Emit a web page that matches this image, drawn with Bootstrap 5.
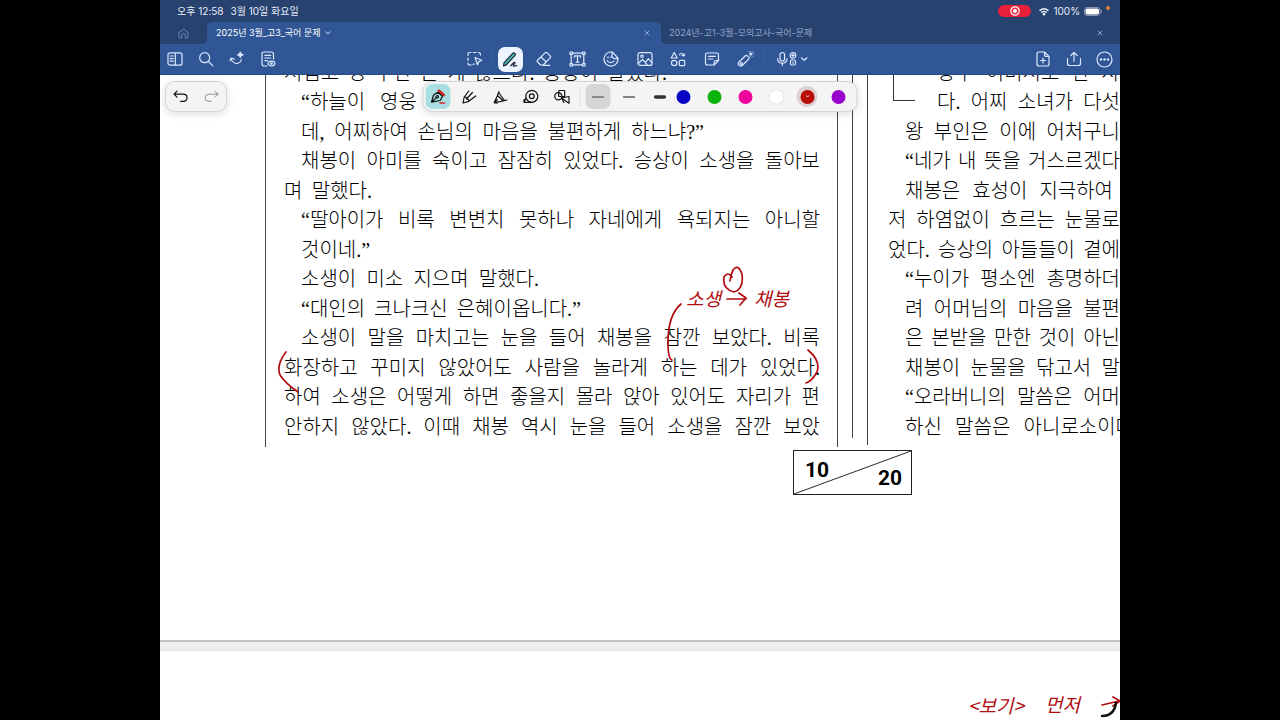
<!DOCTYPE html>
<html lang="ko">
<head>
<meta charset="utf-8">
<meta name="viewport" content="width=device-width, initial-scale=1">
<title>2025년 3월_고3_국어 문제</title>
<link href="https://cdn.jsdelivr.net/npm/bootstrap@5.3.0/dist/css/bootstrap.min.css" rel="stylesheet">
<style>
  :root { --navy: #28426f; --blue: #305696; --ink: #b00d10; }
  body { background: #000; font-family: Inter, "Noto Sans CJK KR", sans-serif; }
  button { background: none; border: 0; padding: 0; color: inherit; }
  svg { display: block; fill: none; stroke: currentColor; stroke-width: 1.2; stroke-linecap: round; stroke-linejoin: round; }
  svg.hairline { stroke-width: .8; }
  svg.strong { stroke-width: 1.4; }

  .app-shell { background: #fff; }
  .status-line { background: var(--navy); color: #e6ecf8; height: 22px; font-size: 10px; line-height: 22px; padding: 0 10px 0 17px; }
  .status-line .clock { margin-right: 7px; }
  .rec-pill { background: #e8203a; width: 33px; height: 12px; border-radius: 6px; }
  .cam-dot { width: 4px; height: 4px; background: #e0823f; align-self: flex-start; margin-top: 6px; }

  .doc-tabs { height: 22px; background: linear-gradient(var(--navy) 50%, var(--blue) 50%); }
  .home-tab { width: 47px; background: var(--navy); color: #7f95bf; border-bottom-right-radius: 5px; }
  .doc-tab { flex: 1 1 0; font-size: 9px; line-height: 22px; }
  .doc-tab a { color: inherit; }
  .doc-tab.open { background: var(--blue); color: #fff; border-radius: 5px 5px 0 0; padding: 0 11px 0 9px; }
  .doc-tab.idle { background: var(--navy); color: #93a5c9; border-bottom-left-radius: 5px; padding: 0 17px 0 8px; }
  .tab-close { color: #a9bce2; }

  .tool-strip { background: var(--blue); color: #dbe8ff; height: 31px; padding: 0 3px 0 2px; border-bottom: 1px solid #274a86; }
  .tool { width: 25px; height: 25px; display: flex; align-items: center; justify-content: center; border-radius: 7px; flex: none; }
  .tool.on { background: #edf3ff; color: #1b2430; }
  .side { flex: 1 1 0; gap: 6px; }
  .mid-tools { padding-right: 7px; }
  .main-tools { width: 260px; }
  .bar { width: 1px; height: 16px; background: #3a61a4; margin: 0 6px; }

  .float-bar { background: #f4f4f5; border: 1px solid #d4d4d6; border-radius: 10px; box-shadow: 0 2px 8px rgba(0,0,0,.14); height: 31px; color: #111; top: 6px; z-index: 3; }
  .history-bar { left: 5px; padding: 0 2px; gap: 6px; }
  .pen-bar { padding: 0 8px 0 2px; }
  .pen-bar .bar { background: #dedee0; margin: 0 5px; height: 20px; }
  .pens { gap: 6px; }
  .pens .picked { background: #a9dfe2; }
  .pens .held { background: #d6d6d9; }
  .swatches { gap: 10px; }
  .swatch { width: 21px; height: 21px; display: flex; align-items: center; justify-content: center; border-radius: 50%; }
  .swatch::before { content: ""; width: 14px; height: 14px; border-radius: 50%; background: var(--c); }
  .swatch.white::before { box-shadow: 0 0 1px #aaa; }
  .swatch.chosen { background: #ddd0d0; color: #fff; position: relative; }
  .swatch.chosen svg { position: absolute; }

  .sheet { height: 565px; }
  .sheet-cols { display: grid; grid-template-columns: 105fr 573fr 15fr 14fr 253fr; }
  .story { font-family: "Liberation Serif", "Noto Sans CJK KR", serif; font-weight: 300; font-size: 20px; color: #000; line-height: 29px; }
  .story p { margin: 0; height: 29px; white-space: nowrap; text-align: justify; text-align-last: justify; padding-left: 17px; }
  .story p:nth-child(even) { margin-bottom: 1px; }
  .story p.flush { padding-left: 0; }
  .story p.hang { padding-left: 49px; }
  .story p.short { padding-right: 7px; }
  .story p.long { margin-right: -14px; }
  .len-a { width: 420px; }
  .len-b { width: 88px; }
  .len-c { width: 255px; }
  .len-d { width: 297px; }
  .len-e { width: 383px; }
  .col-left { grid-column: 2; border: solid #444; border-width: 0 1px; padding: 0 17px 4px 18px; height: 372px; overflow: hidden; }
  .gutter { border-right: 1px solid #444; height: 363px; }
  .col-right { grid-column: 5; border-left: 1px solid #444; padding-left: 20px; height: 370px; position: relative; }
  .story-lines { margin-top: -16px; }
  .elbow { position: absolute; left: 25px; top: 0; width: 22px; height: 26px; border: solid #333; border-width: 0 0 1px 1px; }
  .page-row { display: grid; grid-template-columns: 633fr 119px 208fr; margin-top: 3px; }
  .page-box { grid-column: 2; height: 45px; border: 1px solid #222; font: 700 21px/22px "Liberation Sans Narrow", Roboto, "Liberation Sans", sans-serif; color: #000; position: relative; padding: 8px 9px 5px 11px; }
  .page-box svg { position: absolute; inset: 0; width: 100%; height: 100%; stroke: #222; stroke-width: 1; }
  .sheet-gap { height: 11px; background: #efefef; border-top: 2px solid #c4c4c4; border-bottom: 1px solid #e3e3e3; }
  .ink { position: absolute; inset: 0; width: 100%; height: 100%; color: var(--ink); stroke-width: 1.7; z-index: 2; pointer-events: none; }
  .ink text { fill: var(--ink); stroke: none; font-family: "Noto Sans CJK KR", sans-serif; font-weight: 400; font-style: italic; font-size: 19px; }
</style>
</head>
<body>
<div class="app-shell w-75 mx-auto vh-100 d-flex flex-column overflow-hidden">
  <header class="flex-shrink-0">
    <div class="status-line d-flex align-items-center">
      <span class="clock">오후 12:58</span><span>3월 10일 화요일</span>
      <div class="ms-auto d-flex align-items-center">
        <span class="rec-pill d-flex align-items-center justify-content-center text-white me-2">
          <svg width="10" height="10" viewBox="0 0 10 10"><circle cx="5" cy="5" r="4.2"/><circle cx="5" cy="5" r="1.5" fill="currentColor"/></svg>
        </span>
        <svg class="strong me-1" width="10" height="9" viewBox="0 0 10 9"><path d="M1 3.4Q5 0 9 3.4M2.7 5.3Q5 3.5 7.3 5.3"/><circle cx="5" cy="7.2" r=".7" fill="currentColor"/></svg>
        <span class="me-1">100%</span>
        <svg width="18" height="9" viewBox="0 0 18 9"><rect x=".5" y=".5" width="15.5" height="8" rx="2.6" stroke="#8795b3" stroke-width="1"/><rect x="1.5" y="1.5" width="13.5" height="6" rx="1.8" fill="#fff" stroke="none"/><path d="M17.3 3.4v2" stroke="#8795b3"/></svg>
        <span class="cam-dot rounded-circle ms-1"></span>
      </div>
    </div>
    <nav class="doc-tabs d-flex" aria-label="문서 탭">
      <button class="home-tab d-flex align-items-center justify-content-center" aria-label="홈">
        <svg class="hairline" width="11" height="11" viewBox="0 0 11 11"><path d="M1 4.6 5.5 1 10 4.6V9q0 1-1 1H7.3V7.4q0-1.8-1.8-1.8T3.7 7.4V10H2Q1 10 1 9Z"/></svg>
      </button>
      <div class="doc-tab open d-flex align-items-center">
        <a href="#" class="text-decoration-none">2025년 3월_고3_국어 문제</a>
        <svg class="hairline ms-1" width="8" height="4" viewBox="0 0 8 4"><path d="m1.8.8 2.2 2 2.2-2"/></svg>
        <button class="tab-close ms-auto" aria-label="탭 닫기"><svg class="hairline" width="6" height="6" viewBox="0 0 6 6"><path d="m1 1 4 4m0-4L1 5"/></svg></button>
      </div>
      <div class="doc-tab idle d-flex align-items-center">
        <a href="#" class="text-decoration-none">2024년-고1-3월-모의고사-국어-문제</a>
        <button class="tab-close ms-auto" aria-label="탭 닫기"><svg class="hairline" width="6" height="6" viewBox="0 0 6 6"><path d="m1 1 4 4m0-4L1 5"/></svg></button>
      </div>
    </nav>
    <div class="tool-strip d-flex align-items-center">
      <div class="side d-flex">
        <button class="tool" aria-label="사이드바"><svg width="16" height="16" viewBox="0 0 16 16"><rect x="1" y="1.8" width="14" height="12.4" rx="2"/><path d="M8.3 2v12M3.2 5h3M3.2 7.6h3M3.2 10.2h3"/></svg></button>
        <button class="tool" aria-label="검색"><svg width="16" height="16" viewBox="0 0 16 16"><circle cx="6.7" cy="6.7" r="5"/><path d="m10.5 10.5 4.3 4.3"/></svg></button>
        <button class="tool" aria-label="AI"><svg width="16" height="16" viewBox="0 0 16 16"><path d="M1.5 7.2 3.2 10Q6 13.5 9.2 12.2 12 11 12.4 8.5M1 9.5l2-2.3 2.4 1"/><path d="m11.3 1 .8 2 2 .8-2 .8-.8 2-.8-2-2-.8 2-.8Z" fill="currentColor"/></svg></button>
        <button class="tool" aria-label="문서 보기"><svg width="16" height="16" viewBox="0 0 16 16"><path d="M7 15H4q-2 0-2-2V3q0-2 2-2h7.5q2 0 2 2v5M4.8 4.3h6M4.8 7h6M4.8 9.7h2.6"/><ellipse cx="11.5" cy="12.6" rx="3.4" ry="2.4"/><circle cx="11.5" cy="12.6" r=".7"/></svg></button>
      </div>
      <div class="mid-tools d-flex align-items-center">
        <button class="tool" aria-label="올가미"><svg width="16" height="16" viewBox="0 0 16 16"><path d="M1 4.5V3q0-1.5 1.5-1.5H4M6.3 1.5h3M11.5 1.5Q13.5 1.3 13.5 4M1 7v2.5M1 12q0 2 2 2h1.3M6 13.5l1.2-.6"/><path d="m8 6.5 6.8 2.8-3 1.3-1.3 3.2Z"/></svg></button>
        <span class="bar ms-1"></span>
        <div class="main-tools d-flex justify-content-between">
          <button class="tool on" aria-label="펜" aria-pressed="true"><svg width="17" height="17" viewBox="0 0 17 17"><path d="m2 11.8 8.8-9.5q1-1 2 0t.2 2L4.5 13.6 1.6 15Z" fill="#4bb9bd"/><path d="M8.8 14.8q3.5-4.5 4.2-3.3.5 1-1.4 2.3-.8 1.2.5 1.3l2.5-.5"/></svg></button>
          <button class="tool" aria-label="지우개"><svg width="16" height="16" viewBox="0 0 16 16"><path d="m1.6 9.2 7.5-7.3q1-1 2 0l3 3q1 1 0 2L7.2 14H4.6L1.6 11q-.9-.9 0-1.8ZM5 6l5.3 5M7.2 14.4h6.5"/></svg></button>
          <button class="tool" aria-label="텍스트"><svg width="17" height="16" viewBox="0 0 17 16"><path d="M3 2.2h11M3 13.8h11M2.2 3v10M14.8 3v10"/><g fill="#305696"><rect x="1" y="1" width="2.4" height="2.4"/><rect x="13.6" y="1" width="2.4" height="2.4"/><rect x="1" y="12.6" width="2.4" height="2.4"/><rect x="13.6" y="12.6" width="2.4" height="2.4"/></g><path d="M5.5 6.2V4.8h6v1.4M8.5 4.8v6.4M7.2 11.2h2.6"/></svg></button>
          <button class="tool" aria-label="스티커"><svg width="16" height="16" viewBox="0 0 16 16"><path d="M9.5 1.2A7 7 0 1 0 14.9 7Zm0 0Q8 5.5 10.3 7t4.6 0M4 9.5q3 3.8 7 .6M5 5.8v1.2M8 5.8v.8"/></svg></button>
          <button class="tool" aria-label="이미지"><svg width="16" height="16" viewBox="0 0 16 16"><rect x="1" y="1.6" width="14" height="12.8" rx="2"/><circle cx="5" cy="5.3" r="1.2"/><path d="m1.3 12.5 4.2-4 3 3 2.8-3.8 3.6 4.2M7.8 10.8l2.5 3"/></svg></button>
          <button class="tool" aria-label="요소"><svg width="16" height="16" viewBox="0 0 16 16"><path d="M4.2 1.5 7.2 7H1.2ZM9.3 3.8Q12.5.3 14 4.8M14.8 3.2 14 5l-2-.6"/><circle cx="4.2" cy="12" r="2.7"/><rect x="9.3" y="9.3" width="5.4" height="5.4" rx="1"/></svg></button>
          <button class="tool" aria-label="메모"><svg width="16" height="16" viewBox="0 0 16 16"><path d="M14.5 9.5V4q0-2-2-2h-9q-2 0-2 2v8q0 2 2 2h6.7Zm0 0h-2.3q-2 0-2 2V14M4.3 5.3h7.3M4.3 8h4.5"/></svg></button>
          <button class="tool" aria-label="레이저 포인터"><svg width="17" height="17" viewBox="0 0 17 17"><path d="m1.8 11.2 6.6-6.4q1-1 2 0l1.2 1.3q1 1 0 2l-6.3 6.4q-1.4 1.2-3 0l-.5-.6q-1.3-1.4 0-2.7Z"/><circle cx="4.3" cy="12.5" r="1"/><circle cx="13.7" cy="3" r="1"/><path d="M13.7.3v.2M16 1l-.1.2M16.6 3h-.2M15.7 5.2l-.1-.1M13.7 5.9v-.2M11.6.9l.1.1" stroke-width="1"/></svg></button>
        </div>
        <span class="bar"></span>
        <button class="d-flex align-items-center ms-1" aria-label="녹음"><svg width="35" height="16" viewBox="0 0 35 16"><rect x="5" y="1.5" width="4.6" height="8.5" rx="2.3"/><path d="M2.5 7.5q.4 4.7 4.8 4.7t4.8-4.7M7.3 12.3v2.2"/><circle cx="18" cy="4.4" r="2.8"/><path d="M18 3.2v2.4M16.8 4.4h2.4"/><rect x="15.5" y="9" width="5" height="5" rx="1.2"/><path d="M18 11v1.2M26.5 6.8l2.7 2.6 2.7-2.6"/></svg></button>
      </div>
      <div class="side d-flex justify-content-end">
        <button class="tool" aria-label="페이지 추가"><svg width="14" height="16" viewBox="0 0 14 16"><path d="M8.5 1H3Q1 1 1 3v10q0 2 2 2h8q2 0 2-2V5.5ZM8.5 1v2.5q0 2 2 2H13M7 7v5M4.5 9.5h5"/></svg></button>
        <button class="tool" aria-label="공유"><svg width="16" height="16" viewBox="0 0 16 16"><path d="M1.5 7.5v5q0 2 2 2h9q2 0 2-2v-5M8 10.3V1.5M4.8 4.5 8 1.3l3.2 3.2"/></svg></button>
        <button class="tool" aria-label="더 보기"><svg width="17" height="17" viewBox="0 0 17 17"><circle cx="8.5" cy="8.5" r="7.5"/><g fill="currentColor" stroke="none"><circle cx="5" cy="8.5" r="1.2"/><circle cx="8.5" cy="8.5" r="1.2"/><circle cx="12" cy="8.5" r="1.2"/></g></svg></button>
      </div>
    </div>
  </header>

  <main class="position-relative flex-grow-1 overflow-hidden">
    <div class="float-bar history-bar position-absolute d-flex align-items-center">
      <button class="tool" aria-label="실행 취소"><svg width="15" height="13" viewBox="0 0 15 13"><path d="M4 1.2 1 4.2l3 3M1.3 4.2H10q4 0 4 3.6t-4 3.5H7.5"/></svg></button>
      <button class="tool text-black-50" aria-label="다시 실행"><svg class="hairline" width="15" height="13" viewBox="0 0 15 13"><path d="m11 1.2 3 3-3 3M13.7 4.2H5q-4 0-4 3.6t4 3.5h2.5"/></svg></button>
    </div>
    <div class="float-bar pen-bar position-absolute start-50 translate-middle-x d-flex align-items-center">
      <div class="pens d-flex">
        <button class="tool picked" aria-label="만년필"><svg width="17" height="17" viewBox="0 0 17 17"><path d="m9.3 2.6 5 4.4" stroke="#d3281e" stroke-width="2.6"/><path d="M2 14.2 4 7l4.5-2.8 4.5 4-2.3 4.3ZM2 14.2l5-4.8"/><circle cx="7.8" cy="8.8" r="1.2"/><path d="M10.5 15H15" stroke="#d3281e" stroke-width="1.6"/></svg></button>
        <button class="tool" aria-label="볼펜"><svg width="16" height="16" viewBox="0 0 16 16"><path d="m7.3 2-4.6 6-1.2 6 5.8-1.7L14.2 7M2.7 8q2.5-.4 2.4 2 2.3-.2 2.2 2.3M5.1 10l5.8-6.5"/></svg></button>
        <button class="tool" aria-label="붓펜"><svg width="16" height="16" viewBox="0 0 16 16"><path d="M6.5 2.5 5 6.5l-3.3 7 7-1.2L14.5 11M5 6.5l5.5 5.3M1.7 13.5l3-2.8M6.5 4 12 11.5M2 14h3"/></svg></button>
        <button class="tool" aria-label="테이프"><svg width="17" height="16" viewBox="0 0 17 16"><circle cx="9.3" cy="7.3" r="6"/><circle cx="9.3" cy="7.3" r="2.4"/><path d="M3.5 9 1.5 13.4H9.3M1.5 10.5v3"/></svg></button>
        <button class="tool" aria-label="도형"><svg width="17" height="16" viewBox="0 0 17 16"><circle cx="4.8" cy="7.3" r="3.6"/><rect x="5.2" y="1.5" width="6" height="6" rx=".6"/><path d="m8 9 7.5-1.5v6.8L8 9Zm0 0 2.5 4.5"/></svg></button>
      </div>
      <span class="bar"></span>
      <div class="pens d-flex">
        <button class="tool held" aria-label="가는 선"><svg class="hairline" width="13" height="6" viewBox="0 0 13 6"><path d="M1 3h11"/></svg></button>
        <button class="tool" aria-label="보통 선"><svg width="13" height="6" viewBox="0 0 13 6"><path d="M1 3h11"/></svg></button>
        <button class="tool" aria-label="굵은 선"><svg width="13" height="6" viewBox="0 0 13 6"><path d="M2.2 3h8.6" stroke="#333" stroke-width="3.6"/></svg></button>
      </div>
      <div class="swatches d-flex">
        <button class="swatch" style="--c:#0a05c4" aria-label="파랑"></button>
        <button class="swatch" style="--c:#0db30d" aria-label="초록"></button>
        <button class="swatch" style="--c:#ee069c" aria-label="분홍"></button>
        <button class="swatch white" style="--c:#fff" aria-label="흰색"></button>
        <button class="swatch chosen" style="--c:#b90d08" aria-label="빨강"><svg class="hairline" width="4" height="3" viewBox="0 0 4 3"><path d="m.5.5 1.5 1.5L3.5.5"/></svg></button>
        <button class="swatch" style="--c:#9a05cd" aria-label="보라"></button>
      </div>
    </div>

    <article class="sheet">
      <div class="sheet-cols story">
        <section class="col-left"><div class="story-lines">
          <p class="flush len-e">저럼고 영 무난 본 게 않으나. 승상이 말했다.</p>
          <p>“하늘이 영웅 호걸을 내시매 배필을 또한 정하여 주었는</p>
          <p class="len-a">데, 어찌하여 손님의 마음을 불편하게 하느냐?”</p>
          <p>채봉이 아미를 숙이고 잠잠히 있었다. 승상이 소생을 돌아보</p>
          <p class="flush len-b">며 말했다.</p>
          <p>“딸아이가 비록 변변치 못하나 자네에게 욕되지는 아니할</p>
          <p class="len-b">것이네.”</p>
          <p class="len-c">소생이 미소 지으며 말했다.</p>
          <p class="len-d">“대인의 크나크신 은혜이옵니다.”</p>
          <p>소생이 말을 마치고는 눈을 들어 채봉을 잠깐 보았다. 비록</p>
          <p class="flush">화장하고 꾸미지 않았어도 사람을 놀라게 하는 데가 있었다.</p>
          <p class="flush">하여 소생은 어떻게 하면 좋을지 몰라 앉아 있어도 자리가 편</p>
          <p class="flush">안하지 않았다. 이때 채봉 역시 눈을 들어 소생을 잠깐 보았</p>
        </div></section>
        <div class="gutter"></div>
        <section class="col-right"><span class="elbow"></span><div class="story-lines">
          <p class="hang">장부 이미서로 한 사</p>
          <p class="hang">다. 어찌 소녀가 다섯</p>
          <p>왕 부인은 이에 어처구니</p>
          <p>“네가 내 뜻을 거스르겠다</p>
          <p class="short">채봉은 효성이 지극하여</p>
          <p class="flush">저 하염없이 흐르는 눈물로</p>
          <p class="flush">었다. 승상의 아들들이 곁에</p>
          <p>“누이가 평소엔 총명하더</p>
          <p>려 어머님의 마음을 불편</p>
          <p>은 본받을 만한 것이 아닌</p>
          <p>채봉이 눈물을 닦고서 말</p>
          <p>“오라버니의 말씀은 어머</p>
          <p class="long">하신 말씀은 아니로소이다</p>
        </div></section>
      </div>
      <div class="page-row">
        <div class="page-box d-flex justify-content-between">
          <svg viewBox="0 0 119 45" preserveAspectRatio="none"><path d="M0 45 119 0"/></svg>
          <span class="align-self-start">10</span><span class="align-self-end">20</span>
        </div>
      </div>
    </article>
    <div class="sheet-gap"></div>

    <svg class="ink" viewBox="0 0 960 645" preserveAspectRatio="xMinYMin slice">
      <path d="M521 229Q508 240 508 267 508 284 512 285M572 202Q568 196 564 202 562 214 574 217 584 214 582 199 578 188 573 195 571 199 570 206M567 224H586M579 218 586 223 580 230M126 277Q116 290 120 300 126 309 138 317M648 275Q661 286 657 297 652 306 646 308M942 630 959 626M953 622 960 626 953 631"/>
      <path d="M956 628Q954 641 942 641" stroke="#111" stroke-width="2.5"/>
      <text x="526" y="231">소생</text><text x="594" y="231">채봉</text>
      <text x="808" y="638">&lt;보기&gt;</text><text x="885" y="637">먼저</text>
    </svg>
  </main>
</div>
<script src="https://cdn.jsdelivr.net/npm/bootstrap@5.3.0/dist/js/bootstrap.bundle.min.js"></script>
</body>
</html>
